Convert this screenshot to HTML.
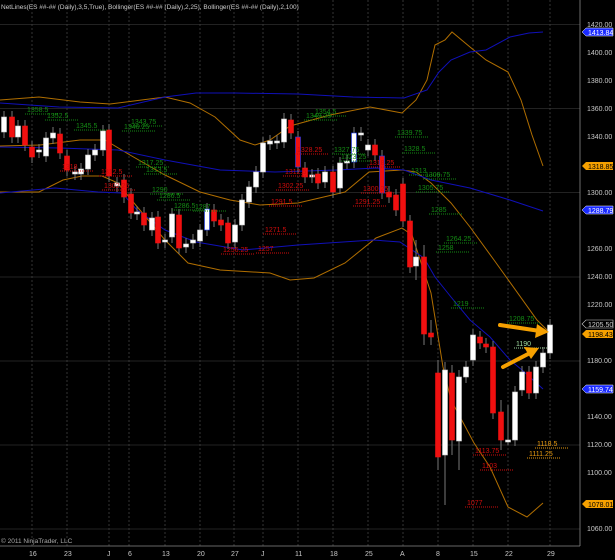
<!DOCTYPE html>
<html><head><meta charset="utf-8"><style>
html,body{margin:0;padding:0;background:#000;width:615px;height:560px;overflow:hidden}
svg{display:block}
text{font-family:"Liberation Sans",sans-serif;font-size:7px}
.g{fill:#148a14}.r{fill:#d00c0c}.o{fill:#e89a10}
.ax{fill:#c8c8c8;font-size:7px}
</style></head><body>
<svg id="s" width="615" height="560" viewBox="0 0 615 560" xmlns="http://www.w3.org/2000/svg">
<rect width="615" height="560" fill="#000"/>
<g id="grid" stroke="#555" stroke-width="0.6"></g>
<line x1="580" y1="0" x2="580" y2="546" stroke="#888" stroke-width="0.8"/>
<line x1="0" y1="546" x2="580" y2="546" stroke="#888" stroke-width="0.8"/>
<g fill="none" stroke-width="1">
<path stroke="#b06e00" d="M0,100 L39,97 L80,102 L110,104 L165,97 L190,103 L215,117 L240,140 L255,145 L270,140 L290,126 L330,115 L370,107 L402,113 L416,100 L427,80 L435,45 L445,40 L452,32 L470,47 L486,60 L508,72 L521,100 L532,135 L543,166"/>
<path stroke="#b06e00" d="M0,146 L40,145 L80,140 L105,140 L130,155 L165,175 L200,192 L230,200 L260,205 L298,203 L345,192 L369,172 L402,170 L416,172 L431,183 L451,203 L470,227 L494,260 L537,320 L547,330"/>
<path stroke="#b06e00" d="M0,192 L39,192 L63,180 L82,176 L102,176 L118,183 L129,197 L165,240 L188,263 L220,270 L270,273 L290,280 L314,278 L345,263 L376,238 L402,228 L412,235 L431,293 L443,367 L451,400 L474,443 L490,467 L508,507 L527,517 L543,503"/>
<path stroke="#1010b8" d="M0,103 L59,107 L118,108 L165,97 L196,93 L235,93 L298,94 L353,97 L404,98 L427,90 L439,72 L451,60 L470,52 L486,50 L510,37 L529,33 L543,32"/>
<path stroke="#1010b8" d="M0,147 L59,148 L118,150 L165,160 L220,170 L275,172 L337,170 L376,168 L404,170 L431,180 L470,188 L510,200 L543,211"/>
<path stroke="#1010b8" d="M0,193 L55,188 L98,192 L122,193 L137,210 L165,230 L196,242 L243,250 L298,245 L373,240 L400,242 L424,258 L435,277 L451,297 L470,320 L490,337 L510,360 L522,370 L543,389"/>
</g>
<g id="cd"></g>
<g id="lbl">
<text x="27" y="112" class="g">1358.5</text><text x="47" y="118" class="g">1352.5</text><text x="76" y="128" class="g">1345.5</text>
<text x="131" y="124" class="g">1343.75</text><text x="124" y="129" class="g">1346.25</text><text x="315" y="114" class="g">1354.5</text>
<text x="306" y="118" class="g">1349.25</text><text x="397" y="135" class="g">1339.75</text><text x="404" y="151" class="g">1328.5</text>
<text x="334" y="152" class="g">1327.75</text><text x="341" y="159" class="g">1323.25</text><text x="411" y="173" class="g">1313</text>
<text x="425" y="177" class="g">1309.75</text><text x="418" y="190" class="g">1305.75</text><text x="138" y="165" class="g">1317.25</text>
<text x="146" y="172" class="g">1313.5</text>
<text x="62" y="169" class="r">1318</text><text x="101" y="174" class="r">1312.5</text><text x="285" y="174" class="r">1312.5</text>
<text x="297" y="152" class="r">1328.25</text><text x="369" y="165" class="r">1318.25</text><text x="104" y="188" class="r">1302.25</text>
<text x="278" y="188" class="r">1302.25</text><text x="363" y="191" class="r">1300.25</text>
<text x="152" y="192" class="g">1290</text><text x="159" y="198" class="g">1286.5</text><text x="195" y="209" class="g">1287</text>
<text x="174" y="208" class="g">1286.5</text><text x="431" y="212" class="g">1285</text><text x="446" y="241" class="g">1264.25</text>
<text x="438" y="250" class="g">1258</text><text x="453" y="306" class="g">1219</text><text x="509" y="321" class="g">1208.75</text>
<text x="516" y="346" style="fill:#9fd99f">1190</text>
<text x="271" y="204" class="r">1291.5</text><text x="355" y="204" class="r">1291.25</text><text x="265" y="232" class="r">1271.5</text>
<text x="223" y="252" class="r">1256.25</text><text x="258" y="251" class="r">1257</text>
<text x="475" y="453" class="r">1113.75</text><text x="482" y="468" class="r">1103</text><text x="467" y="505" class="r">1077</text>
<text x="537" y="446" class="o">1118.5</text><text x="529" y="456" class="o">1111.25</text>
</g>
<g id="dots" stroke-width="1" stroke-dasharray="1,1"></g>
<path d="M500,325 L540,331" stroke="#f5a000" stroke-width="4" stroke-linecap="round"/>
<path d="M549,332 L537,324 L535,338 Z" fill="#f5a000"/>
<path d="M503,367 L530,353" stroke="#f5a000" stroke-width="4" stroke-linecap="round"/>
<path d="M539,348 L524,347 L531,359 Z" fill="#f5a000"/>
<g class="ax">
<text x="587" y="27">1420.00</text><text x="587" y="55">1400.00</text><text x="587" y="83">1380.00</text>
<text x="587" y="111">1360.00</text><text x="587" y="139">1340.00</text><text x="587" y="195">1300.00</text>
<text x="587" y="251">1260.00</text><text x="587" y="279">1240.00</text><text x="587" y="307">1220.00</text>
<text x="587" y="363">1180.00</text><text x="587" y="419">1140.00</text><text x="587" y="447">1120.00</text>
<text x="587" y="475">1100.00</text><text x="587" y="531">1060.00</text>
</g>
<g>
<path d="M582,32 L586,28 L613,28 L613,36 L586,36 Z" fill="#1a2aff" stroke="#fff" stroke-width="0.5"/><text x="588" y="35" fill="#fff">1413.84</text>
<path d="M582,166 L586,162 L613,162 L613,170 L586,170 Z" fill="#f5a000"/><text x="588" y="169" fill="#000">1318.85</text>
<path d="M582,210 L586,206 L613,206 L613,214 L586,214 Z" fill="#1a2aff" stroke="#fff" stroke-width="0.5"/><text x="588" y="213" fill="#fff">1288.79</text>
<path d="M582,324 L586,320 L613,320 L613,328 L586,328 Z" fill="#000" stroke="#ccc" stroke-width="0.6"/><text x="588" y="327" fill="#ccc">1205.50</text>
<path d="M582,334 L586,330 L613,330 L613,338 L586,338 Z" fill="#f5a000"/><text x="588" y="337" fill="#000">1198.43</text>
<path d="M582,389 L586,385 L613,385 L613,393 L586,393 Z" fill="#1a2aff" stroke="#fff" stroke-width="0.5"/><text x="588" y="392" fill="#fff">1159.74</text>
<path d="M582,504 L586,500 L613,500 L613,508 L586,508 Z" fill="#f5a000"/><text x="588" y="507" fill="#000">1078.01</text>
</g>
<g class="ax">
<text x="29" y="556">16</text><text x="64" y="556">23</text><text x="107" y="556">J</text><text x="128" y="556">6</text>
<text x="162" y="556">13</text><text x="197" y="556">20</text><text x="231" y="556">27</text><text x="261" y="556">J</text>
<text x="295" y="556">11</text><text x="330" y="556">18</text><text x="365" y="556">25</text><text x="400" y="556">A</text>
<text x="436" y="556">8</text><text x="470" y="556">15</text><text x="505" y="556">22</text><text x="547" y="556">29</text>
</g>
<text x="1" y="9" fill="#ccc" style="font-size:6.5px">NetLines(ES ##-## (Daily),3,5,True), Bollinger(ES ##-## (Daily),2,25), Bollinger(ES ##-## (Daily),2,100)</text>
<text x="1" y="543" fill="#aaa" style="font-size:6.5px">© 2011 NinjaTrader, LLC</text>
</svg>
<script>
var NS="http://www.w3.org/2000/svg";
function el(p,n,a){var e=document.createElementNS(NS,n);for(var k in a)e.setAttribute(k,a[k]);p.appendChild(e);return e;}
var g=document.getElementById("grid");
[32,67,109,129,165,200,234,263,298,333,368,403,438,473,508,550].forEach(function(x){el(g,"line",{x1:x,y1:0,x2:x,y2:546,"stroke-dasharray":"2,2"});});
[24.5,108.5,192.5,277,361,445,529].forEach(function(y){el(g,"line",{x1:0,y1:y,x2:580,y2:y,stroke:"#444"});});
var c=[[4,117,132,"w"],[12,117,137,"r"],[18,126,137,"w"],[25,126,145,"r"],[32,147,157,"r"],[39,150,152,"w"],[46,138,156,"w"],[53,133,138,"w"],[60,134,153,"r"],[67,156,170,"r"],[75,172,174,"w"],[81,169,174,"w"],[88,155,169,"w"],[95,150,155,"w"],[103,131,150,"w"],[109,130,176,"r"],[117,183,186,"w"],[124,180,197,"r"],[131,194,213,"r"],[137,212,214,"w"],[144,213,225,"r"],[152,218,230,"w"],[158,217,243,"r"],[165,240,242,"w"],[172,214,237,"w"],[179,215,248,"r"],[186,244,247,"w"],[193,240,243,"w"],[200,230,241,"w"],[207,209,230,"b"],[214,210,221,"r"],[221,220,225,"r"],[228,223,243,"r"],[235,225,242,"w"],[242,200,225,"w"],[249,187,202,"w"],[256,172,187,"w"],[263,143,172,"w"],[270,141,144,"w"],[277,141,143,"w"],[284,119,142,"w"],[291,120,133,"r"],[298,137,167,"rb"],[305,168,177,"r"],[312,175,177,"w"],[318,174,183,"r"],[325,172,182,"w"],[333,172,192,"r"],[340,163,188,"w"],[347,161,163,"w"],[354,133,162,"b"],[361,133,135,"w"],[368,145,150,"w"],[375,145,155,"r"],[382,156,193,"rb"],[389,192,197,"r"],[396,195,210,"r"],[403,184,221,"r"],[410,221,267,"r"],[416,257,266,"w"],[424,257,334,"r"],[431,333,337,"r"],[438,373,457,"r"],[445,370,455,"w"],[452,373,440,"r"],[459,377,441,"w"],[466,367,377,"w"],[473,335,360,"w"],[480,337,343,"r"],[486,344,347,"r"],[493,347,413,"r"],[501,412,440,"r"],[508,440,442,"w"],[515,392,440,"w"],[522,372,390,"w"],[529,372,393,"r"],[536,367,393,"w"],[543,353,367,"w"],[550,325,353,"w"]];
var wk={438:[360,470],445:[362,505],452:[365,455],459:[370,470],431:[320,345],424:[245,345],416:[240,280],508:[405,445],501:[400,450]};
var cd=document.getElementById("cd");
c.forEach(function(d){var x=d[0],t=d[1],b=d[2],k=d[3];var w=wk[x]||[t-6,b+6];
el(cd,"line",{x1:x,y1:w[0],x2:x,y2:w[1],stroke:"#777","stroke-width":1});
var f=(k=="r"||k=="rb")?"#f01010":"#fff";var s=(k=="b"||k=="rb")?"#2040ff":(k=="r"?"#f01010":"#ccc");
el(cd,"rect",{x:x-2.5,y:t,width:5,height:Math.max(b-t,1.5),fill:f,stroke:s,"stroke-width":0.6});});
var dt=document.getElementById("dots");
document.querySelectorAll("#lbl text").forEach(function(t){var x=+t.getAttribute("x"),y=+t.getAttribute("y");var col=getComputedStyle(t).fill;
el(dt,"line",{x1:x-2,y1:y+2,x2:x+32,y2:y+2,stroke:col});});
</script>
</body></html>
